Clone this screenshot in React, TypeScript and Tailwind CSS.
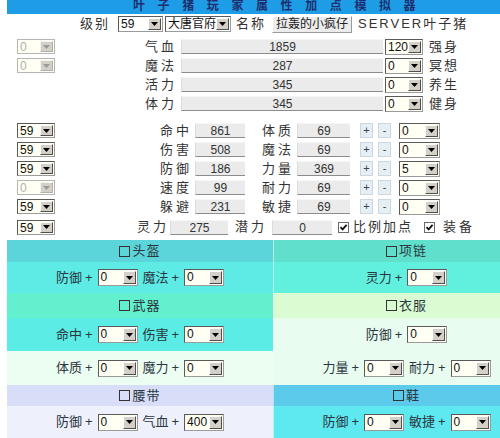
import React from "react";

const F = "font-['Liberation_Sans','Noto_Sans_CJK_SC',sans-serif]";

function Tri({ disabled }: { disabled?: boolean }) {
  return (
    <svg width="7" height="4" viewBox="0 0 7 4">
      <path d="M0 0H7L3.5 4Z" fill={disabled ? "#9a9a9a" : "#000"} />
    </svg>
  );
}

function Sel({
  v,
  w,
  h = "h-[16px]",
  disabled,
  white,
}: {
  v: string;
  w: string;
  h?: string;
  disabled?: boolean;
  white?: boolean;
}) {
  return (
    <div
      className={`flex ${w} ${h} border ${
        disabled
          ? "border-[#b5b5b5]"
          : "border-t-[#5a5a5a] border-l-[#5a5a5a] border-b-[#9a9a9a] border-r-[#9a9a9a]"
      } ${white ? "bg-white" : "bg-[#fffff3]"}`}
    >
      <span
        className={`flex-1 pl-[2px] text-[12px] leading-[14px] whitespace-nowrap overflow-hidden ${
          disabled ? "text-[#b0b0b0]" : "text-[#111]"
        }`}
      >
        {v}
      </span>
      <span
        className={`shrink-0 my-[1px] mr-[1px] w-[13px] flex items-center justify-center bg-[#d4d0c8] border ${
          disabled
            ? "border-t-[#f4f4f4] border-l-[#f4f4f4] border-b-[#b0b0b0] border-r-[#b0b0b0]"
            : "border-t-white border-l-white border-b-[#505050] border-r-[#505050]"
        }`}
      >
        <Tri disabled={disabled} />
      </span>
    </div>
  );
}

function Field({ v, w }: { v: string; w: string }) {
  return (
    <div
      className={`${w} h-[15px] bg-[#ebebeb] border-t border-t-[#f6f6f6] border-b border-b-[#8c8c8c] border-l border-l-[#dcdcdc] text-center text-[12px] leading-[14px] text-[#333]`}
    >
      {v}
    </div>
  );
}

function PM({ c }: { c: string }) {
  return (
    <div className="w-[13px] h-[15px] bg-[#e6eff4] border border-[#cbd8e0] text-[11px] leading-[13px] text-center text-[#345]">
      {c}
    </div>
  );
}

function Check() {
  return (
    <div className="w-[11px] h-[11px] border border-[#6a6a6a] bg-white flex items-center justify-center">
      <svg width="9" height="9" viewBox="0 0 9 9">
        <path d="M1.5 4.2L3.6 6.4L7.6 1.8" stroke="#111" strokeWidth="1.8" fill="none" />
      </svg>
    </div>
  );
}

const top4 = [
  { left: true, l: "气血", v: "1859", s: "120", r: "强身" },
  { left: true, l: "魔法", v: "287", s: "0", r: "冥想" },
  { left: false, l: "活力", v: "345", s: "0", r: "养生" },
  { left: false, l: "体力", v: "345", s: "0", r: "健身" },
];

const mid = [
  { lv: "59", ld: false, a: "命中", av: "861", b: "体质", bv: "69", s: "0" },
  { lv: "59", ld: false, a: "伤害", av: "508", b: "魔法", bv: "69", s: "0" },
  { lv: "59", ld: false, a: "防御", av: "186", b: "力量", bv: "369", s: "5" },
  { lv: "0", ld: true, a: "速度", av: "99", b: "耐力", bv: "69", s: "0" },
  { lv: "59", ld: false, a: "躲避", av: "231", b: "敏捷", bv: "69", s: "0" },
];

type Cell = { bg: string; head?: string; pairs?: { l: string; v: string }[] };

const table: { h: string; l: Cell; r: Cell }[] = [
  { h: "h-[22px]", l: { bg: "bg-[#5cd5da]", head: "头盔" }, r: { bg: "bg-[#5fdfcc]", head: "项链" } },
  {
    h: "h-[31px]",
    l: { bg: "bg-[#5eebe6]", pairs: [{ l: "防御", v: "0" }, { l: "魔法", v: "0" }] },
    r: { bg: "bg-[#62f0de]", pairs: [{ l: "灵力", v: "0" }] },
  },
  { h: "h-[25px]", l: { bg: "bg-[#62f0cf]", head: "武器" }, r: { bg: "bg-[#dafcd2]", head: "衣服" } },
  {
    h: "h-[33px]",
    l: { bg: "bg-[#5cece6]", pairs: [{ l: "命中", v: "0" }, { l: "伤害", v: "0" }] },
    r: { bg: "bg-[#e8fdf0]", pairs: [{ l: "防御", v: "0" }] },
  },
  {
    h: "h-[34px]",
    l: { bg: "bg-[#ecfdf2]", pairs: [{ l: "体质", v: "0" }, { l: "魔力", v: "0" }] },
    r: { bg: "bg-[#e8fdf0]", pairs: [{ l: "力量", v: "0" }, { l: "耐力", v: "0" }] },
  },
  { h: "h-[21px]", l: { bg: "bg-[#d8ddf8]", head: "腰带" }, r: { bg: "bg-[#5ccaea]", head: "鞋" } },
  {
    h: "h-[32px]",
    l: { bg: "bg-[#eef0fc]", pairs: [{ l: "防御", v: "0" }, { l: "气血", v: "400" }] },
    r: { bg: "bg-[#5ee8f0]", pairs: [{ l: "防御", v: "0" }, { l: "敏捷", v: "0" }] },
  },
];

function TCell({ c, right }: { c: Cell; right?: boolean }) {
  return (
    <div
      className={`w-[266px] h-full ${c.bg} ${right ? "border-l border-l-white/50" : ""} flex items-center justify-center gap-[5px] text-[13px] text-[#2b3640]`}
    >
      {c.head && (
        <span className="flex items-center gap-[2px] tracking-[1px]">
          <span className="inline-block w-[11px] h-[11px] border border-[#333]" />
          {c.head}
        </span>
      )}
      {c.pairs &&
        c.pairs.map((p, i) => (
          <React.Fragment key={i}>
            <span className="whitespace-nowrap">
              {p.l}
              <span className="ml-[3px]">+</span>
            </span>
            <Sel v={p.v} w="w-[40px]" h="h-[17px]" />
          </React.Fragment>
        ))}
    </div>
  );
}

export default function App() {
  return (
    <div className={`relative w-[500px] h-[438px] overflow-hidden bg-white text-[#333] ${F}`}>
      {/* title bar */}
      <div className="ml-[7px] w-[493px] h-[14px] bg-[#1e9de6] overflow-hidden">
        <div className="pl-[126px] -mt-[1px] text-[12px] font-bold leading-[14px] tracking-[12.6px] text-[#1d2f6f] whitespace-nowrap">
          叶子猪玩家属性加点模拟器
        </div>
      </div>

      {/* level / school / name */}
      <div className="flex items-center h-[20px] text-[13px]">
        <span className="ml-[80px] w-[38px] tracking-[2px]">级别</span>
        <Sel v="59" w="w-[45px]" white />
        <div className="ml-[2px]">
          <Sel v="大唐官府" w="w-[66px]" white />
        </div>
        <span className="ml-[5px] w-[36px] tracking-[2px]">名称</span>
        <div className="h-[17px] w-[80px] bg-[#ececec] border border-t-white border-l-white border-b-[#9a9a9a] border-r-[#9a9a9a] text-[12px] leading-[15px] text-center text-[#222]">
          拉轰的小疯仔
        </div>
        <span className="ml-[6px] tracking-[2px] text-[#333]">SERVER叶子猪</span>
      </div>

      {/* top 4 stats */}
      <div className="mt-[3px]">
        {top4.map((r, i) => (
          <div key={i} className="flex items-center h-[19px] text-[13px]">
            <div className="w-[145px] pl-[17px]">
              {r.left && <Sel v="0" w="w-[38px]" h="h-[15px]" disabled />}
            </div>
            <span className="w-[36px] tracking-[3px]">{r.l}</span>
            <Field v={r.v} w="w-[202px]" />
            <div className="ml-[2px]">
              <Sel v={r.s} w="w-[38px]" />
            </div>
            <span className="ml-[6px] tracking-[2px]">{r.r}</span>
          </div>
        ))}
      </div>

      {/* attribute rows */}
      <div className="mt-[8px]">
        {mid.map((r, i) => (
          <div key={i} className="flex items-center h-[19px] text-[13px]">
            <div className="w-[160px] pl-[17px]">
              <Sel v={r.lv} w="w-[38px]" h="h-[15px]" disabled={r.ld} />
            </div>
            <span className="w-[35px] tracking-[3px]">{r.a}</span>
            <Field v={r.av} w="w-[50px]" />
            <span className="ml-[17px] w-[35px] tracking-[3px]">{r.b}</span>
            <Field v={r.bv} w="w-[53px]" />
            <div className="ml-[10px]">
              <PM c="+" />
            </div>
            <div className="ml-[5px]">
              <PM c="-" />
            </div>
            <div className="ml-[8px]">
              <Sel v={r.s} w="w-[41px]" />
            </div>
          </div>
        ))}
        <div className="flex items-center h-[22px] text-[13px]">
          <div className="w-[137px] pl-[17px]">
            <Sel v="59" w="w-[38px]" h="h-[15px]" />
          </div>
          <span className="w-[33px] tracking-[3px]">灵力</span>
          <Field v="275" w="w-[58px]" />
          <span className="ml-[7px] w-[37px] tracking-[3px]">潜力</span>
          <Field v="0" w="w-[60px]" />
          <div className="ml-[6px]">
            <Check />
          </div>
          <span className="ml-[4px] tracking-[2px]">比例加点</span>
          <div className="ml-[11px]">
            <Check />
          </div>
          <span className="ml-[8px] tracking-[3px]">装备</span>
        </div>
      </div>

      {/* equipment table */}
      <div className="mt-[2px] ml-[7px] w-[532px]">
        {table.map((row, i) => (
          <div key={i} className={`flex ${row.h}`}>
            <TCell c={row.l} />
            <TCell c={row.r} right />
          </div>
        ))}
      </div>
    </div>
  );
}
